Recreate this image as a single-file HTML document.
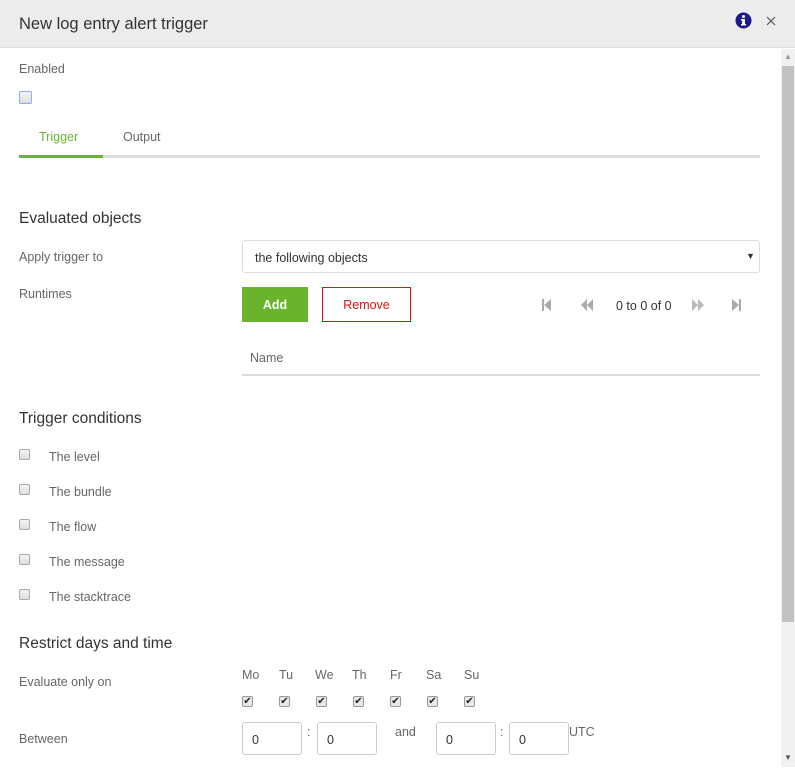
<!DOCTYPE html>
<html><head><style>
*{margin:0;padding:0;box-sizing:border-box}
body{width:795px;height:778px;background:#fff;font-family:"Liberation Sans",sans-serif;color:#666;font-size:12.5px;position:relative;overflow:hidden}
.a{position:absolute;white-space:nowrap}
.cb{position:absolute;width:11px;height:11px;border:1px solid #aaa;border-radius:2px;background:linear-gradient(#f4f4f4,#ddd)}
.h{color:#333;font-size:15.5px}
.inp{position:absolute;height:33px;border:1px solid #ccc;border-radius:3px;padding:10px 0 0 9px;color:#333}
.ck{position:absolute;width:11px;height:11px;border:1px solid #999;border-radius:2px;background:#e8e8e8;font-size:10px;line-height:9px;text-align:center;color:#222}
</style></head><body>
<div class="a" style="left:0;top:0;width:795px;height:48px;background:#ececec;border-bottom:1px solid #ddd"></div>
<div class="a" style="left:19px;top:15px;font-size:16.5px;color:#333">New log entry alert trigger</div>
<svg class="a" style="left:735px;top:12px" width="17" height="17"><circle cx="8.5" cy="8.5" r="8" fill="#1a1a8a"/><rect x="7" y="7" width="3" height="6" fill="#fff"/><rect x="6" y="7" width="4" height="1.5" fill="#fff"/><rect x="6" y="12" width="5" height="1.5" fill="#fff"/><circle cx="8.5" cy="4.5" r="1.5" fill="#fff"/></svg>
<svg class="a" style="left:766px;top:16px" width="10" height="10"><path d="M1 1L9 9M9 1L1 9" stroke="#555" stroke-width="1.2"/></svg>
<div class="a" style="left:781px;top:49px;width:14px;height:718px;background:#f1f1f1"></div>
<div class="a" style="left:782px;top:66px;width:12px;height:556px;background:#c1c1c1"></div>
<div class="a" style="left:784px;top:52px;font-size:8px;color:#999">▲</div>
<div class="a" style="left:784px;top:753px;font-size:8px;color:#555">▼</div>

<div class="a" style="left:19px;top:62px">Enabled</div>
<div class="cb" style="left:19px;top:91px;width:13px;height:13px;border-color:#8ab0e8"></div>
<div class="a" style="left:39px;top:130px;color:#6ab42d">Trigger</div>
<div class="a" style="left:123px;top:130px">Output</div>
<div class="a" style="left:19px;top:155px;width:741px;height:3px;background:#ddd"></div>
<div class="a" style="left:19px;top:155px;width:84px;height:3px;background:#6ab42d"></div>

<div class="a h" style="left:19px;top:210px">Evaluated objects</div>
<div class="a" style="left:19px;top:250px">Apply trigger to</div>
<div class="a" style="left:242px;top:240px;width:518px;height:33px;border:1px solid #ddd;border-radius:3px;color:#333;padding:10px 0 0 12px">the following objects</div>
<div class="a" style="left:746px;top:251px;font-size:9px;color:#333">▼</div>
<div class="a" style="left:19px;top:287px">Runtimes</div>
<div class="a" style="left:242px;top:287px;width:66px;height:35px;background:#6ab42d;color:#fff;font-weight:bold;text-align:center;line-height:36px">Add</div>
<div class="a" style="left:322px;top:287px;width:89px;height:35px;border:1px solid #d11;color:#d11;text-align:center;line-height:35px">Remove</div>
<svg class="a" style="left:541px;top:299px" width="210" height="12">
<g fill="#aaa"><rect x="1" y="0" width="2" height="12"/><path d="M10 0L3 6L10 12Z"/>
<path d="M46 0L40 6L46 12Z M52 0L46 6L52 12Z"/>
<path d="M151 0L157 6L151 12Z M157 0L163 6L157 12Z" fill="#bbb"/>
<rect x="198" y="0" width="2" height="12"/><path d="M191 0L198 6L191 12Z"/></g></svg>
<div class="a" style="left:616px;top:299px;color:#333">0 to 0 of 0</div>
<div class="a" style="left:250px;top:351px">Name</div>
<div class="a" style="left:242px;top:374px;width:518px;height:2px;background:#ddd"></div>

<div class="a h" style="left:19px;top:410px">Trigger conditions</div>
<div class="cb" style="left:19px;top:449px"></div><div class="a" style="left:49px;top:450px">The level</div>
<div class="cb" style="left:19px;top:484px"></div><div class="a" style="left:49px;top:485px">The bundle</div>
<div class="cb" style="left:19px;top:519px"></div><div class="a" style="left:49px;top:520px">The flow</div>
<div class="cb" style="left:19px;top:554px"></div><div class="a" style="left:49px;top:555px">The message</div>
<div class="cb" style="left:19px;top:589px"></div><div class="a" style="left:49px;top:590px">The stacktrace</div>

<div class="a h" style="left:19px;top:635px">Restrict days and time</div>
<div class="a" style="left:19px;top:675px">Evaluate only on</div>
<div class="a" style="left:242px;top:668px">Mo</div><div class="a" style="left:279px;top:668px">Tu</div><div class="a" style="left:315px;top:668px">We</div><div class="a" style="left:352px;top:668px">Th</div><div class="a" style="left:390px;top:668px">Fr</div><div class="a" style="left:426px;top:668px">Sa</div><div class="a" style="left:464px;top:668px">Su</div>
<div class="ck" style="left:242px;top:696px">✔</div><div class="ck" style="left:279px;top:696px">✔</div><div class="ck" style="left:316px;top:696px">✔</div><div class="ck" style="left:353px;top:696px">✔</div><div class="ck" style="left:390px;top:696px">✔</div><div class="ck" style="left:427px;top:696px">✔</div><div class="ck" style="left:464px;top:696px">✔</div>
<div class="a" style="left:19px;top:732px">Between</div>
<div class="inp" style="left:242px;top:722px;width:60px">0</div>
<div class="a" style="left:307px;top:725px">:</div>
<div class="inp" style="left:317px;top:722px;width:60px">0</div>
<div class="a" style="left:395px;top:725px">and</div>
<div class="inp" style="left:436px;top:722px;width:60px">0</div>
<div class="a" style="left:500px;top:725px">:</div>
<div class="inp" style="left:509px;top:722px;width:60px">0</div>
<div class="a" style="left:569px;top:725px">UTC</div>
</body></html>
